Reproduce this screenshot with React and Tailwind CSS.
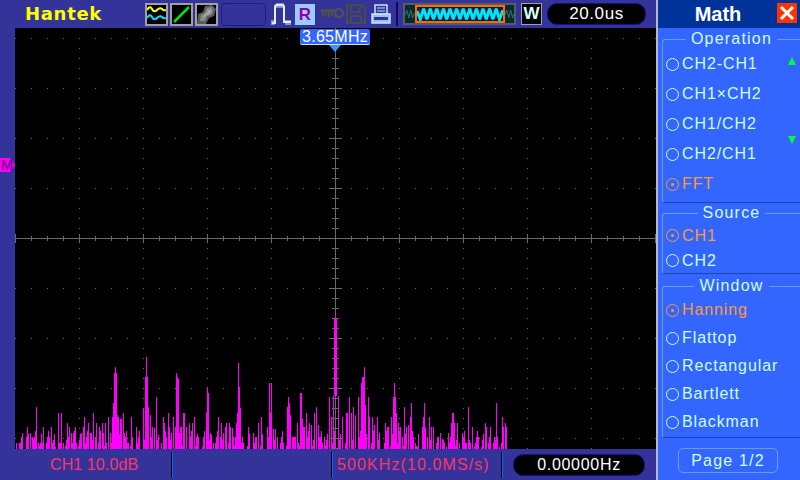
import React from "react";

const SANS = "font-['Liberation_Sans',Arial,sans-serif]";

const A = [50,310,57,310,68,280,80,292,83,262,92,280,97,292,101,298,110,202,114,310,122,310,128,310,131,262,148,292,155,262,158,310,166,320,176,220,182,310,185,220,190,310,203,250,206,292,209,262,215,280,221,280,227,262,230,310,245,280,250,262,254,232,257,310,266,250,272,280,275,280,281,220,287,292,290,250,298,262,308,250,311,280,317,250,320,310,326,232,332,280,338,232,341,190,344,100,347,82,350,100,351,225,355,232,360,238,365,238,371,220,374,280,382,310,386,310,394,232,398,292,409,262,416,292,431,205,436,110,439,52,442,110,445,202,451,225,458,262,463,265,469,172,475,285,485,310,491,232,494,250,500,292,505,220,509,262,515,280,521,232,526,262,530,100,533,112,536,118,539,280,542,262,545,262,551,220,554,220,559,262,568,250,578,250,584,232,590,292,596,292,607,322,619,220,622,142,625,160,631,280,634,285,640,310,656,232,662,292,665,250,670,280,676,262,680,250,689,250,692,262,697,265,701,292,706,292,710,250,713,220,716,70,719,142,722,205,727,292,731,310,745,262,760,280,766,292,769,292,775,250];
const B = [4,232,22,262,28,130,34,130,31,220,40,268,46,268,52,292,64,292,70,310,82,202,85,172,88,190,91,225,97,292,100,292,106,292,112,250,115,310,121,160,124,160,127,238,130,262,133,262,139,220,148,250,154,255,163,220,169,202,175,255,178,292,187,310,193,292,208,172,214,232,220,172,235,175,247,232,259,220,262,220,268,172,274,220,280,202,286,225,295,172,304,130,307,112,310,112,313,82,316,195,326,172,328,232,337,232,343,255,352,232,358,280,373,310,376,250,382,262,385,262,394,232,400,172,403,130,406,172,409,220,415,250,421,262,427,292,433,202,439,262,445,255,451,232,454,190,460,292,466,310,472,320,487,262,490,232,493,190,496,265,502,292,508,232,514,262,520,262,535,292,541,280,547,298,553,310,559,320,565,280,574,250,577,220,580,220,583,250,592,250,598,310,607,280,616,310,619,310,625,202,631,310,637,262,643,320,655,292,664,320,676,250,679,262,691,262,700,310,703,292,709,190,712,292,718,320,727,232,730,262,736,250,739,262];

function bars() {
  const top = {};
  const put = (x, y) => {
    if (top[x] === undefined || y < top[x]) top[x] = y;
  };
  for (let i = 0; i < A.length; i += 2) put(Math.floor(A[i] / 3), Math.round(340 + A[i + 1] / 3));
  for (let i = 0; i < B.length; i += 2) put(Math.floor(260 + B[i] / 3), Math.round(340 + B[i + 1] / 3));
  for (let x = 16; x <= 506; x++) {
    const h = (x * 7919) % 13;
    if (top[x] === undefined && h < 6) put(x, 449 - (3 + h * 3));
  }
  return Object.keys(top).map((x) => [Number(x), top[x]]);
}

function range(a, b, s) {
  const r = [];
  for (let v = a; v <= b; v += s) r.push(v);
  return r;
}

function Scope() {
  const rows = [38, 88, 138, 188, 288, 338, 388, 438];
  const cols = [79, 143, 207, 271, 399, 463, 527, 591];
  return (
    <svg viewBox="15 28 641 421" width="641" height="421" shapeRendering="crispEdges" className="block">
      <rect x="15" y="28" width="641" height="421" fill="#000" />
      {rows.map((y) => range(15, 655, 16).map((x) => <rect key={x + "r" + y} x={x} y={y} width="1" height="1" fill="#666" />))}
      {cols.map((x) => range(38, 448, 10).map((y) => <rect key={x + "c" + y} x={x} y={y} width="1" height="1" fill="#666" />))}
      {bars().map(([x, y], i) => <rect key={i} x={x} y={y} width="1" height={449 - y} fill="#ff00ff" />)}
      <rect x="15" y="238" width="641" height="1" fill="#6b6b6b" />
      <rect x="335" y="28" width="1" height="421" fill="#6b6b6b" />
      {range(15, 655, 16).map((x) => <rect key={"h" + x} x={x} y={(x - 15) % 64 === 0 ? 234 : 236} width="1" height={(x - 15) % 64 === 0 ? 9 : 5} fill="#6b6b6b" />)}
      {range(58, 448, 10).map((y) => <rect key={"v" + y} x={(y - 38) % 50 === 0 ? 329 : 332} y={y} width={(y - 38) % 50 === 0 ? 13 : 7} height="1" fill="#6b6b6b" />)}
      <rect x="334" y="318" width="3" height="78" fill="#ff00ff" />
      <rect x="333" y="396" width="1" height="53" fill="#ff00ff" />
      <rect x="338" y="396" width="1" height="53" fill="#ff00ff" />
    </svg>
  );
}

function IconBox({ children }) {
  return <div className="w-[23px] h-[23px] border-2 border-[#a0a0a0] bg-black">{children}</div>;
}

function Toolbar() {
  return (
    <div className="h-[28px] flex items-center bg-[#333399] pl-[25px]">
      <div className="w-[120px] text-[#ffff00] font-bold text-[18px] leading-none tracking-[0.7px] font-['DejaVu_Sans',sans-serif]">Hantek</div>
      <div className="flex items-center gap-[2px]">
        <IconBox>
          <svg viewBox="0 0 19 19" className="block w-full h-full">
            <path d="M0 5 Q3 0 5 4 T10 5 T15 4 T19 5" fill="none" stroke="#ffff00" strokeWidth="2" />
            <path d="M0 13 Q3 8 5 12 T10 13 T15 12 T19 13" fill="none" stroke="#00e5ff" strokeWidth="2" />
          </svg>
        </IconBox>
        <IconBox>
          <svg viewBox="0 0 19 19" className="block w-full h-full">
            <path d="M2 17 L17 2" stroke="#00e600" strokeWidth="2.5" />
          </svg>
        </IconBox>
        <IconBox>
          <svg viewBox="0 0 19 19" className="block w-full h-full">
            <path d="M0 19 L1 9 L6 7 L8 1 L15 0 L19 4 L17 11 L12 13 L9 19 Z" fill="#5c5c5c" />
            <path d="M3 16 L4 10 L8 8 L10 3 L15 2 L16 7 L14 10 L10 11 L8 16 Z" fill="#8c8c8c" />
            <path d="M6 13 L7 10 L10 8 L12 5 L14 5 L13 8 L9 10 Z" fill="#b0b0b0" />
          </svg>
        </IconBox>
        <div className="w-[45px] h-[23px] rounded-[4px] border border-[#1a1a90] ml-[1px] bg-[#333399]" />
      </div>
      <svg viewBox="0 0 21 22" width="21" height="22" className="ml-[5px]">
        <path d="M1 20 H4 V4 Q4 2 6 2 H11 Q13 2 13 4 V19 H20" fill="none" stroke="#d8f4ff" strokeWidth="2" />
        <path d="M6 0 V5 M8 0 V5 M10 0 V5 M12 0 V5 M1 22 V17 M3 22 V17 M15 22 V17 M17 22 V17 M19 22 V17" stroke="#d8f4ff" strokeWidth="1" />
      </svg>
      <div className={`w-[20px] h-[21px] ml-[3px] bg-[#99ccff] text-[#990099] font-bold text-[17px] leading-[21px] text-center ${SANS}`}>R</div>
      <svg viewBox="0 0 24 14" width="24" height="14" className="ml-[5px]">
        <path d="M1 4 H15" stroke="#505050" strokeWidth="3.5" />
        <path d="M3 6 V10 M6 6 V9 M9 6 V10 M12 6 V9" stroke="#505050" strokeWidth="2" />
        <circle cx="19" cy="6" r="4" fill="none" stroke="#505050" strokeWidth="2.5" />
      </svg>
      <svg viewBox="0 0 20 20" width="20" height="20" className="ml-[2px]">
        <path d="M1 1 H16 L19 4 V19 H1 Z" fill="none" stroke="#4a4a4a" strokeWidth="2" />
        <path d="M5 1 V8 H14 V1 M5 19 V12 H15 V19" fill="none" stroke="#4a4a4a" strokeWidth="2" />
      </svg>
      <svg viewBox="0 0 20 21" width="20" height="21" className="ml-[5px]">
        <path d="M4 1 H16 V10 H4 Z" fill="#333399" stroke="#c8e4ff" strokeWidth="1.5" />
        <path d="M6 4 H14 M6 7 H14" stroke="#c8e4ff" strokeWidth="1" />
        <path d="M1 10 H19 V19 H1 Z" fill="#99c4f0" stroke="#c8e4ff" strokeWidth="1.5" />
        <path d="M3 13 H17 V16 H3 Z" fill="#333399" />
      </svg>
      <div className="w-[2px] h-[24px] ml-[5px] bg-[#0a0a60]" />
      <div className="ml-[5px] w-[113px] h-[22px] bg-[#555c66] flex items-stretch p-[2px]">
        <div className="flex-1 bg-[#0a2a2a]">
          <svg viewBox="0 0 10 18" className="block w-full h-full">
            <path d="M0 10 L2 5 L4 13 L6 5 L8 13 L10 8" fill="none" stroke="#1f8080" strokeWidth="1" />
          </svg>
        </div>
        <div className="w-[90px] shrink-0 border-2 border-[#ff6a00] bg-[#0f2030]">
          <svg viewBox="0 0 86 18" preserveAspectRatio="none" className="block w-full h-full">
            <path d="M0 5 L3.3 16 L6.6 2 L9.9 16 L13.2 2 L16.5 16 L19.8 2 L23.1 16 L26.4 2 L29.7 16 L33 2 L36.3 16 L39.6 2 L42.9 16 L46.2 2 L49.5 16 L52.8 2 L56.1 16 L59.4 2 L62.7 16 L66 2 L69.3 16 L72.6 2 L75.9 16 L79.2 2 L82.5 16 L86 4" fill="none" stroke="#00e5ff" strokeWidth="3" />
          </svg>
        </div>
        <div className="flex-1 bg-[#0a2a2a]">
          <svg viewBox="0 0 10 18" className="block w-full h-full">
            <path d="M0 10 L2 5 L4 13 L6 5 L8 13 L10 8" fill="none" stroke="#1f8080" strokeWidth="1" />
          </svg>
        </div>
      </div>
      <div className={`ml-[5px] w-[21px] h-[22px] bg-black border border-[#a0a0a0] text-[#d8ffff] font-bold text-[17px] leading-[20px] text-center ${SANS}`}>W</div>
      <div className={`ml-[5px] w-[99px] h-[22px] bg-black border border-[#11118c] rounded-[10px] text-white text-[17px] leading-[20px] tracking-[0.6px] text-center ${SANS}`}>20.0us</div>
    </div>
  );
}

function Marker() {
  return (
    <div className="absolute left-0 top-[129px] w-[16px] h-[16px] overflow-hidden">
      <svg viewBox="0 0 16 16" width="16" height="16" className="absolute left-0 top-0">
        <path d="M0 1 H10 L15 8 L10 15 H0 Z" fill="#ff00ff" />
      </svg>
      <span className={`absolute left-[0px] top-[0px] w-[14px] text-center text-[15px] leading-[16px] text-[#8a0a9a] font-bold ${SANS}`}>M</span>
    </div>
  );
}

function FreqTag() {
  return (
    <div className="absolute left-[285px] top-[1px] flex flex-col items-center w-[70px]">
      <div className={`w-[70px] h-[16px] bg-[#3366ff] rounded-[2px] border-b border-[#cfe0ff] text-white text-[16px] leading-[15px] tracking-[0.3px] text-center ${SANS}`}>3.65MHz</div>
      <svg viewBox="0 0 12 7" width="12" height="7" className="block">
        <path d="M0 0 H12 L6 7 Z" fill="#3399ff" />
      </svg>
    </div>
  );
}

function StatusBar() {
  const sep = "w-[2px] h-[26px] bg-gradient-to-r from-black from-50% to-[#0066ff] to-50%";
  const red = `text-[#ff3366] text-[16px] leading-none ${SANS}`;
  return (
    <div className="h-[31px] bg-[#333399] flex items-center">
      <div className={`w-[171px] pl-[50px] ${red} tracking-[0.1px]`}>CH1 10.0dB</div>
      <div className={sep} />
      <div className="w-[158px]" />
      <div className={sep} />
      <div className={`w-[168px] pl-[4px] ${red} tracking-[1.1px] whitespace-nowrap`}>500KHz(10.0MS/s)</div>
      <div className={sep} />
      <div className={`ml-[10px] w-[132px] h-[22px] rounded-[10px] bg-black border border-[#11118c] text-white text-[16px] leading-[20px] tracking-[0.7px] text-center ${SANS}`}>0.00000Hz</div>
    </div>
  );
}

function Radio({ label, active, h }) {
  const c = active ? "text-[#ff9933]" : "text-[#ccffff]";
  return (
    <div className={`flex items-center ${h} ${c}`}>
      <span className={`ml-[3px] w-[13px] h-[13px] rounded-full border flex items-center justify-center ${active ? "border-[#ff9933]" : "border-[#ccffff]"}`}>
        {active ? <span className="w-[3px] h-[3px] rounded-full bg-[#ff9933]" /> : null}
      </span>
      <span className="ml-[3px] text-[16px] leading-none tracking-[0.9px] whitespace-nowrap">{label}</span>
    </div>
  );
}

function Group({ title, className, children }) {
  return (
    <fieldset className={`border-l border-t border-b border-l-[#6b9be8] border-t-[#6b9be8] border-b-[#1a44b0] rounded-l-[3px] ${className}`}>
      <legend className="mx-auto px-[5px] h-[16px] text-[16px] leading-[16px] tracking-[1.2px] text-[#ccffff]">{title}</legend>
      {children}
    </fieldset>
  );
}

function Panel() {
  return (
    <div className="w-[144px] h-[480px] flex flex-col border-l-2 border-[#b8b8c8]">
      <div className={`relative h-[28px] bg-[#003399] flex items-center justify-center pr-[22px] text-white font-bold text-[20px] ${SANS}`}>
        Math
        <div className="absolute right-[3px] top-[3px] w-[20px] h-[20px] bg-[#ff3300] flex items-center justify-center">
          <svg viewBox="0 0 16 16" width="16" height="16">
            <path d="M2 2 L14 14 M14 2 L2 14" stroke="#fff" strokeWidth="3" />
          </svg>
        </div>
      </div>
      <div className={`relative flex-1 bg-[#3366ff] pl-[4px] pt-[3px] ${SANS}`}>
        <Group title="Operation" className="pt-[2px] pb-[3px]">
          <Radio h="h-[30px]" label="CH2-CH1" />
          <Radio h="h-[30px]" label="CH1×CH2" />
          <Radio h="h-[30px]" label="CH1/CH2" />
          <Radio h="h-[30px]" label="CH2/CH1" />
          <Radio h="h-[30px]" label="FFT" active />
        </Group>
        <Group title="Source" className="mt-[2px] pt-[2px]">
          <Radio h="h-[25px]" label="CH1" active />
          <Radio h="h-[25px]" label="CH2" />
        </Group>
        <Group title="Window" className="mt-[4px] pt-[2px] pb-[1px]">
          <Radio h="h-[28px]" label="Hanning" active />
          <Radio h="h-[28px]" label="Flattop" />
          <Radio h="h-[28px]" label="Rectangular" />
          <Radio h="h-[28px]" label="Bartlett" />
          <Radio h="h-[28px]" label="Blackman" />
        </Group>
        <div className="mt-[10px] ml-[16px] w-[100px] h-[25px] rounded-[5px] border border-[#6b9be8] text-[#ccffff] text-[16px] leading-[23px] tracking-[1.2px] text-center">Page 1/2</div>
        <svg viewBox="0 0 8 8" width="8" height="8" className="absolute right-[4px] top-[29px]">
          <path d="M4 0 L8 8 H0 Z" fill="#00ff33" />
        </svg>
        <svg viewBox="0 0 8 8" width="8" height="8" className="absolute right-[4px] top-[108px]">
          <path d="M0 0 H8 L4 8 Z" fill="#00ff33" />
        </svg>
      </div>
    </div>
  );
}

export default function App() {
  return (
    <div className="w-[800px] h-[480px] overflow-hidden flex bg-[#333399]">
      <div className="w-[656px] h-[480px] flex flex-col">
        <Toolbar />
        <div className="relative h-[421px] flex">
          <div className="w-[15px]" />
          <div className="relative w-[641px] h-[421px]">
            <Scope />
            <FreqTag />
          </div>
          <Marker />
        </div>
        <StatusBar />
      </div>
      <Panel />
    </div>
  );
}
